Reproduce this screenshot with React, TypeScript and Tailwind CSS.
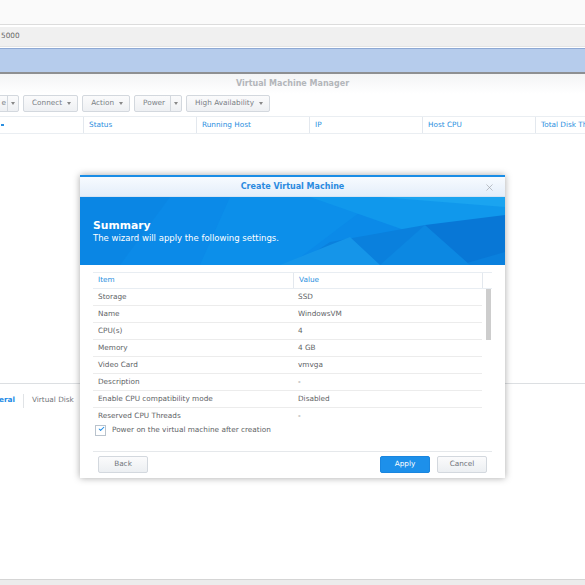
import { Check, X } from 'lucide-react';

const gridCols = [
  { label: '', w: 'w-[83px] shrink-0' },
  { label: 'Status', w: 'w-[113px] shrink-0' },
  { label: 'Running Host', w: 'w-[113px] shrink-0' },
  { label: 'IP', w: 'w-[113px] shrink-0' },
  { label: 'Host CPU', w: 'w-[113px] shrink-0' },
  { label: 'Total Disk Throughput', w: 'flex-1' },
];

const summary = [
  ['Storage', 'SSD'],
  ['Name', 'WindowsVM'],
  ['CPU(s)', '4'],
  ['Memory', '4 GB'],
  ['Video Card', 'vmvga'],
  ['Description', '-'],
  ['Enable CPU compatibility mode', 'Disabled'],
  ['Reserved CPU Threads', '-'],
];

function Caret({ tight }: { tight?: boolean }) {
  return <span className={`inline-block w-0 h-0 border-l-[2.5px] border-r-[2.5px] border-t-[3px] border-l-transparent border-r-transparent border-t-[#888] align-middle ${tight ? '' : 'ml-[5px]'}`} />;
}

function ToolButton({ label, split }: { label: string; split?: boolean }) {
  return (
    <div className="h-[17px] flex items-stretch rounded-[2px] border border-[#d3d8de] bg-gradient-to-b from-[#fbfbfc] to-[#eef0f3] text-[#7a7f86]">
      <div className={`flex items-center ${split ? 'pl-[8px] pr-[5px]' : 'pl-[8px] pr-[6px]'}`}>
        {label}
        {!split && <Caret />}
      </div>
      {split && (
        <div className="flex items-center justify-center w-[11px] border-l border-[#d3d8de]">
          <Caret tight />
        </div>
      )}
    </div>
  );
}

function Banner() {
  return (
    <div className="relative h-[68px] bg-[#0b8ae8] overflow-hidden">
      <svg className="absolute inset-0" width="425" height="68" viewBox="0 0 425 68" preserveAspectRatio="none">
        <polygon points="0,0 90,0 40,68 0,68" fill="#0a86e4" />
        <polygon points="150,0 300,0 210,68 120,68" fill="#0c8fea" />
        <polygon points="230,0 425,0 425,20 330,35" fill="#1098ec" />
        <polygon points="300,0 425,0 425,10" fill="#1aa4f0" />
        <polygon points="250,45 345,28 425,40 425,68 215,68" fill="#0a80dd" />
        <polygon points="345,28 425,18 425,55 380,68 345,68" fill="#0877d6" />
        <polygon points="345,28 390,68 300,68" fill="#0c88e2" />
        <polygon points="200,68 270,40 300,68" fill="#1595e9" />
      </svg>
      <div className="relative pl-[13px] pt-[22px] text-white">
        <div className="text-[10.8px] font-bold leading-[13px]">Summary</div>
        <div className="text-[8.5px] leading-[12px]">The wizard will apply the following settings.</div>
      </div>
    </div>
  );
}

function Dialog() {
  return (
    <div className="absolute left-[80px] top-[175px] w-[425px] h-[303px] bg-white border-t-2 border-[#1a8de6] shadow-[0_0_7px_rgba(0,0,0,0.35)] flex flex-col text-[7.3px]">
      <div className="h-[20px] flex items-center justify-center relative bg-gradient-to-b from-[#f7fbff] to-[#e4eefa] border-b border-[#d6e3f2]">
        <span className="text-[8px] font-bold text-[#2a8ae0]">Create Virtual Machine</span>
        <X className="absolute right-[10px] top-[5px] text-[#9ca1a7]" size={11} strokeWidth={1.4} />
      </div>
      <Banner />
      <div className="px-[13px] pt-[7px] flex flex-col flex-1">
        <div className="relative h-[150px] overflow-hidden">
          <div className="flex h-[17px] items-center border-t border-b border-[#e8edf2] text-[#2b8fe0]">
            <div className="w-[200px] pl-[5px]">Item</div>
            <div className="w-[189px] h-full flex items-center pl-[5px] border-l border-[#e3e8ee]">Value</div>
            <div className="flex-1 h-full border-l border-[#e3e8ee]" />
          </div>
          {summary.map(([k, v]) => (
            <div key={k} className="flex h-[17px] pt-[1px] items-center border-b border-[#ececec] text-[#606366] mr-[10px]">
              <div className="w-[200px] pl-[5px]">{k}</div>
              <div className="pl-[5px]">{v}</div>
            </div>
          ))}
          <div className="absolute right-[1px] top-[17px] w-[5px] h-[51px] bg-[#cdcdcd]" />
        </div>
        <label className="flex items-center h-[14px] mt-[1px] text-[#606366]">
          <span className="w-[11px] h-[11px] ml-[2px] mr-[6px] border border-[#b9c3cd] bg-white flex items-center justify-center">
            <Check size={12} strokeWidth={3.6} className="text-[#1d8be6] -mt-[2px] ml-[2px]" />
          </span>
          Power on the virtual machine after creation
        </label>
        <div className="mt-[14px] border-t border-[#e5e8eb]" />
        <div className="flex items-center mt-[4px] px-[5px]">
          <button className="w-[50px] h-[17px] rounded-[2px] border border-[#d3d8de] bg-gradient-to-b from-[#fbfbfc] to-[#eceff2] text-[#6f747a]">Back</button>
          <div className="flex-1" />
          <button className="w-[50px] h-[17px] rounded-[2px] border border-[#1a86df] bg-[#1d90ea] text-white">Apply</button>
          <button className="w-[50px] h-[17px] ml-[7px] rounded-[2px] border border-[#d3d8de] bg-gradient-to-b from-[#fbfbfc] to-[#eceff2] text-[#6f747a]">Cancel</button>
        </div>
      </div>
    </div>
  );
}

export default function App() {
  return (
    <div className="relative w-[585px] h-[585px] overflow-hidden bg-white text-[7.3px] font-['DejaVu_Sans',sans-serif]">
      <div className="h-[25px] bg-[#fafafa] border-b border-[#dcdcdc]" />
      <div className="h-[20px] mt-[2px] bg-[#f0f0f0] border-b border-[#e4e4e4] flex items-center text-[#666]">
        <span className="ml-[1px]">5000</span>
      </div>
      <div className="h-[26px] mt-[1px] bg-[#b6ccec] border-t border-[#8ea9d4] border-b-2 border-b-[#8d8f92]" />
      <div className="h-[20px] flex items-center justify-center bg-gradient-to-b from-[#f3f4f5] to-white text-[#b3b6ba] font-bold text-[8px]">
        Virtual Machine Manager
      </div>
      <div className="flex items-center gap-[4px] h-[18px]">
        <div className="h-[17px] flex items-stretch rounded-[2px] border border-[#d3d8de] bg-gradient-to-b from-[#fbfbfc] to-[#eef0f3] text-[#7a7f86] -ml-[3px]">
          <div className="flex items-center justify-end w-[9px] pr-[1px]">e</div>
          <div className="flex items-center justify-center w-[11px] border-l border-[#d3d8de]"><Caret tight /></div>
        </div>
        <ToolButton label="Connect" />
        <ToolButton label="Action" />
        <ToolButton label="Power" split />
        <ToolButton label="High Availability" />
      </div>
      <div className="flex h-[18px] mt-[4px] border-t border-b border-[#eaeef2] text-[#2b8fe0]">
        {gridCols.map((c, i) => (
          <div key={i} className={`${c.w} flex items-center pl-[5px] whitespace-nowrap ${i > 0 ? 'border-l border-[#e3e8ee]' : ''}`}>
            {i === 0 ? <span className="w-[3px] h-[1.5px] bg-[#2b8fe0] -ml-[4px]" /> : c.label}
          </div>
        ))}
      </div>
      <div className="h-[249px]" />
      <div className="border-t border-[#dcdfe2] h-[32px] flex items-center pt-[2px]">
        <span className="font-bold text-[#1d8be6] -ml-[1px]">eral</span>
        <span className="w-px h-[14px] bg-[#e0e3e6] ml-[8px]" />
        <span className="ml-[8px] text-[#6f747a]">Virtual Disk</span>
      </div>
      <div className="absolute left-0 right-0 top-[579px] h-[6px] border-t border-[#d5d5d5] bg-[#ececec]" />
      <Dialog />
    </div>
  );
}
